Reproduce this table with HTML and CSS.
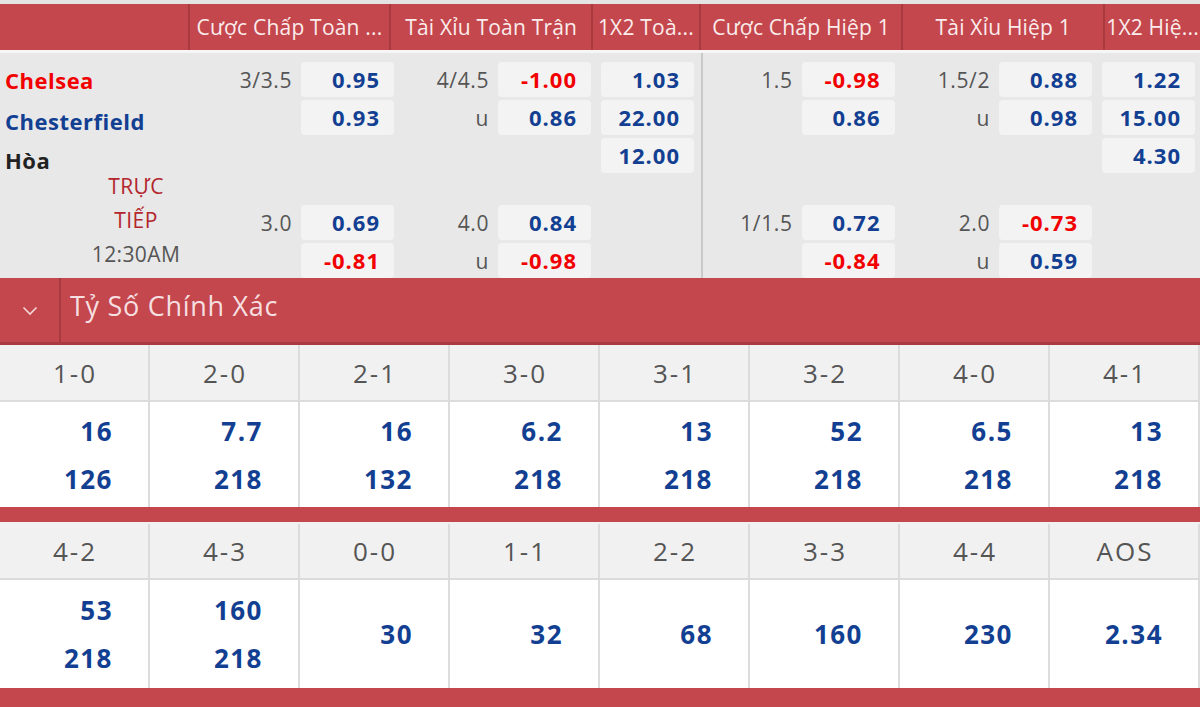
FILE: index.html
```html
<!DOCTYPE html>
<html lang="vi">
<head>
<meta charset="utf-8">
<title>Odds</title>
<link rel="stylesheet" href="styles.css">
</head>
<body>
<div class="page">
  <div class="topstrip"></div>
  <div class="odds-head">
    <div class="hc h-team"></div>
    <div class="hc h-wide">Cược Chấp Toàn ...</div>
    <div class="hc h-wide">Tài Xỉu Toàn Trận</div>
    <div class="hc h-narrow">1X2 Toà...</div>
    <div class="hc h-wide2">Cược Chấp Hiệp 1</div>
    <div class="hc h-wide">Tài Xỉu Hiệp 1</div>
    <div class="hc h-last">1X2 Hiệ...</div>
  </div>
  <div class="odds-body">
    <div class="teams">
      <div class="team home">Chelsea</div>
      <div class="team away">Chesterfield</div>
      <div class="team draw">Hòa</div>
      <div class="status">
        <div class="live">TRỰC</div>
        <div class="live">TIẾP</div>
        <div class="time">12:30AM</div>
      </div>
    </div>
    <div class="half half1">
      <div class="mcol">
        <div class="line"><span class="lbl">3/3.5</span><span class="box blue">0.95</span></div>
        <div class="line"><span class="lbl"></span><span class="box blue">0.93</span></div>
        <div class="line empty"></div>
        <div class="line sep"><span class="lbl">3.0</span><span class="box blue">0.69</span></div>
        <div class="line"><span class="lbl"></span><span class="box red">-0.81</span></div>
      </div>
      <div class="mcol">
        <div class="line"><span class="lbl">4/4.5</span><span class="box red">-1.00</span></div>
        <div class="line"><span class="lbl">u</span><span class="box blue">0.86</span></div>
        <div class="line empty"></div>
        <div class="line sep"><span class="lbl">4.0</span><span class="box blue">0.84</span></div>
        <div class="line"><span class="lbl">u</span><span class="box red">-0.98</span></div>
      </div>
      <div class="xcol">
        <div class="line"><span class="box blue">1.03</span></div>
        <div class="line"><span class="box blue">22.00</span></div>
        <div class="line"><span class="box blue">12.00</span></div>
      </div>
    </div>
    <div class="half half2">
      <div class="mcol">
        <div class="line"><span class="lbl">1.5</span><span class="box red">-0.98</span></div>
        <div class="line"><span class="lbl"></span><span class="box blue">0.86</span></div>
        <div class="line empty"></div>
        <div class="line sep"><span class="lbl">1/1.5</span><span class="box blue">0.72</span></div>
        <div class="line"><span class="lbl"></span><span class="box red">-0.84</span></div>
      </div>
      <div class="mcol">
        <div class="line"><span class="lbl">1.5/2</span><span class="box blue">0.88</span></div>
        <div class="line"><span class="lbl">u</span><span class="box blue">0.98</span></div>
        <div class="line empty"></div>
        <div class="line sep"><span class="lbl">2.0</span><span class="box red">-0.73</span></div>
        <div class="line"><span class="lbl">u</span><span class="box blue">0.59</span></div>
      </div>
      <div class="xcol">
        <div class="line"><span class="box blue">1.22</span></div>
        <div class="line"><span class="box blue">15.00</span></div>
        <div class="line"><span class="box blue">4.30</span></div>
      </div>
    </div>
  </div>

  <div class="section-head">
    <div class="chev">
      <svg width="16" height="10" viewBox="0 0 16 10"><path d="M1.5 1.5 L8 8 L14.5 1.5" fill="none" stroke="#f3d6d7" stroke-width="1.6"/></svg>
    </div>
    <div class="section-title">Tỷ Số Chính Xác</div>
  </div>

  <div class="scores">
    <div class="srow shead">
      <div class="sc">1-0</div><div class="sc">2-0</div><div class="sc">2-1</div><div class="sc">3-0</div>
      <div class="sc">3-1</div><div class="sc">3-2</div><div class="sc">4-0</div><div class="sc">4-1</div>
    </div>
    <div class="srow svals">
      <div class="sv"><span>16</span><span>126</span></div>
      <div class="sv"><span>7.7</span><span>218</span></div>
      <div class="sv"><span>16</span><span>132</span></div>
      <div class="sv"><span>6.2</span><span>218</span></div>
      <div class="sv"><span>13</span><span>218</span></div>
      <div class="sv"><span>52</span><span>218</span></div>
      <div class="sv"><span>6.5</span><span>218</span></div>
      <div class="sv"><span>13</span><span>218</span></div>
    </div>
  </div>
  <div class="redbar"></div>
  <div class="scores">
    <div class="srow shead second">
      <div class="sc">4-2</div><div class="sc">4-3</div><div class="sc">0-0</div><div class="sc">1-1</div>
      <div class="sc">2-2</div><div class="sc">3-3</div><div class="sc">4-4</div><div class="sc">AOS</div>
    </div>
    <div class="srow svals tall">
      <div class="sv"><span>53</span><span>218</span></div>
      <div class="sv"><span>160</span><span>218</span></div>
      <div class="sv"><span>30</span></div>
      <div class="sv"><span>32</span></div>
      <div class="sv"><span>68</span></div>
      <div class="sv"><span>160</span></div>
      <div class="sv"><span>230</span></div>
      <div class="sv"><span>2.34</span></div>
    </div>
  </div>
  <div class="redbar bottom"></div>
</div>
</body>
</html>
```

FILE: styles.css
```css
* { box-sizing: border-box; margin: 0; padding: 0; }
html, body { width: 1200px; height: 707px; overflow: hidden; }
body { font-family: "Open Sans", "Noto Sans", sans-serif; background: #e9e9e9; }
.page { width: 1200px; }

.topstrip { height: 4px; background: #e4e4e4; }

.odds-head {
  display: flex;
  height: 49px;
  background: #c4474d;
  border-bottom: 3px solid #f6f6f6;
}
.hc {
  color: #fbecec;
  font-size: 21px;
  letter-spacing: 0.2px;
  display: flex;
  align-items: center;
  justify-content: center;
  white-space: nowrap;
  overflow: hidden;
  border-right: 2px solid #a93a40;
}
.h-team { width: 190px; }
.h-wide { width: 202px; }
.h-narrow { width: 108px; }
.h-wide2 { width: 203px; }
.h-last { width: 95px; border-right: none; }

.odds-body {
  display: flex;
  height: 225px;
  background: #e8e8e8;
  overflow: hidden;
}
.teams { width: 198px; padding-top: 9px; }
.team { font-size: 22px; letter-spacing: 0.5px; font-weight: 700; height: 41px; line-height: 36px; padding-left: 5px; }
.home { color: #f20000; }
.away { color: #123f92; }
.draw { color: #222; height: 25px; line-height: 32px; }
.status { width: 100px; margin-left: 86px; text-align: center; font-size: 21px; letter-spacing: 0.4px; margin-top: 0; }
.live { color: #b3262d; height: 34px; line-height: 34px; }
.time { color: #555; height: 34px; line-height: 34px; }

.half { display: flex; padding-top: 9px; }
.half1 { width: 505px; padding-right: 7px; border-right: 2px solid #c9c9c9; }
.half2 { width: 495px; padding-right: 3px; }
.half1 .mcol:first-child { width: 197px; }
.half2 .mcol:first-child { width: 192px; }
.mcol { width: 198px; display: flex; flex-direction: column; gap: 3px; }
.xcol { width: 103px; padding-left: 10px; display: flex; flex-direction: column; gap: 3px; }
.line { height: 35px; display: flex; align-items: center; }
.line.sep { margin-top: 29px; }
.lbl { flex: 1; text-align: right; padding-right: 9px; color: #555; font-size: 21px; letter-spacing: 0.6px; }
.box {
  width: 93px; height: 35px;
  background: #f3f3f3;
  border-radius: 4px;
  text-align: right;
  padding-right: 14px;
  line-height: 34px;
  font-size: 22px;
  letter-spacing: 1px;
  font-weight: 700;
}
.blue { color: #123f92; }
.red { color: #f20000; }

.section-head {
  display: flex;
  height: 67px;
  background: #c4474d;
  border-bottom: 3px solid #a93a40;
}
.chev {
  width: 61px;
  border-right: 2px solid #a93a40;
  display: flex; align-items: center; justify-content: center;
  padding-top: 2px;
}
.section-title { color: #f6dfe0; font-size: 27px; letter-spacing: 0.7px; padding-left: 9px; line-height: 55px; }

.scores { background: #fff; }
.srow { display: flex; }
.shead { height: 57px; background: #f1f1f1; border-bottom: 2px solid #dcdcdc; }
.shead.second { height: 58px; padding-top: 2px; }
.sc {
  width: 150px; border-right: 2px solid #dcdcdc;
  display: flex; align-items: center; justify-content: center;
  font-size: 26px; letter-spacing: 2px; color: #555;
  padding-left: 2px;
}
.svals { height: 105px; }
.svals.tall { height: 108px; }
.sv {
  width: 150px; border-right: 2px solid #dcdcdc;
  display: flex; flex-direction: column; justify-content: center; align-items: flex-end;
  padding-right: 35px; gap: 10px;
  font-size: 26px; letter-spacing: 1.5px; font-weight: 700; color: #123f92;
}
.sv span { line-height: 38px; }
.redbar { height: 15px; background: #c4474d; }
.redbar.bottom { height: 19px; }
```
